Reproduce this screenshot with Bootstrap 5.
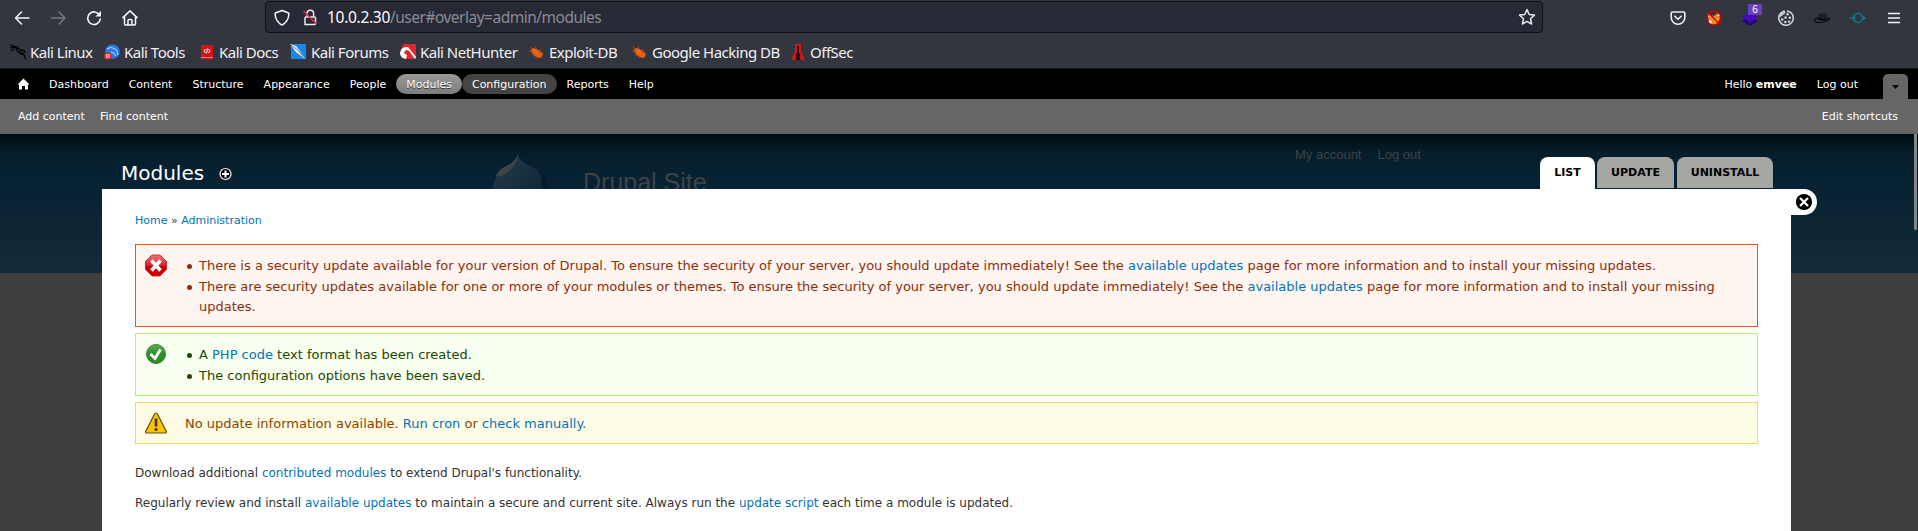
<!DOCTYPE html>
<html lang="en">
<head>
<meta charset="utf-8">
<title>Modules | Drupal Site</title>
<link href="https://cdn.jsdelivr.net/npm/bootstrap@5.3.0/dist/css/bootstrap.min.css" rel="stylesheet">
<style>
body{height:531px;overflow:hidden;background:#3f3f3f;font-family:"DejaVu Sans",sans-serif;font-size:13px;line-height:20px;color:#333}
a{color:#0074bd;text-decoration:none}
svg{display:block;flex:none}
.browser{height:69px;background:#33363e;border-bottom:1px solid #15171b;font-family:"Noto Sans",sans-serif;color:#fbfbfe}
.toolrow{height:35px;padding:0 6px 0 4px}
.slot{width:36px;height:35px}
.urlbar{width:1278px;height:32px;margin:1px 0 0 117px;background:#272935;border:1px solid #101217;border-radius:4px;font-size:15.5px;padding:0 6px 0 8px}
.urlbar .host{letter-spacing:-.3px}
.urlbar .path{color:#8a8b94;letter-spacing:-.5px}
.address{margin-left:9px}
.lock{margin-left:12px}
.marks{height:33px;padding:1px 0 0 10px;font-size:15px;line-height:33px;letter-spacing:-.5px}
.marks a{color:#f0f0f4;white-space:nowrap}
.marks span{margin-left:5px}
.marks .tight span{margin-left:4px}
.count{top:4px;left:16px;width:14px;height:11px;background:#6c3fc0;border-radius:1px;font-size:10px;line-height:11px;color:#fff}
.adminbar{height:30px;background:#000;font-size:11px;line-height:20px;padding:0 10px 0 8px}
.adminbar a,.adminbar .who{color:#fff;padding:1px 10px 0;border-radius:10px;height:20px}
.adminbar .homelink{padding:0 9px}
.adminbar .lit{background:linear-gradient(#999,#7d7d7d);text-shadow:#333 0 1px 0}
.adminbar .hov{background:#444}
.toggler{width:25px;height:25px;background:#666;border-radius:5px 5px 0 0;margin-left:15px}
.shortcuts{height:35px;background:#666;font-size:11px;padding:1px 20px 0 18px;border-bottom:1px solid #5e5e5e;column-gap:15px}
.shortcuts a{color:#fff}
.sitehead{height:139px;background:linear-gradient(#000b12 0,#03151f 9px,#061d2b 20px,#062132 36px,#072233 50px,#132b3a 139px);font-family:"Liberation Sans",sans-serif;color:#3e4346;z-index:0}
.sitehead .name{left:583px;top:33px;font-size:25px;line-height:30px}
.sitehead .user{left:1295px;top:11px;font-size:13px;gap:16px}
.sitehead svg{left:489px;top:19px}
.thumb{right:1px;top:0;width:3px;height:96px;background:#858585;border-radius:0 0 2px 2px}
.overlaybox{width:1689px;margin-left:102px;z-index:1}
.titlebar{height:55px;padding:0 18px 0 19px}
.heading{padding-bottom:4px}
.titlebar h1{font-size:20px;line-height:24px;color:#fff;font-weight:400;margin:0 15px 0 0}
.tabset{gap:3px}
.tabset a{height:31px;background:#a6a7a2;color:#000;font-size:11px;font-weight:700;line-height:27px;padding:2px 0 0;text-align:center;border-radius:8px 8px 0 0}
.tabset a.on{height:32px;background:#fff;margin-right:-1px}
.panel{height:342px;background:#fff;padding:22px 33px 0}
.closer{left:1689px;top:55px;width:26px;height:26px;background:#fff;border-radius:0 13px 13px 0}
.crumbs{font-size:11px;margin-bottom:13px}
.note{border:1px solid;padding:11px 10px 9px 8px;margin-bottom:6px;column-gap:15px}
.note ul{padding-left:17px;margin:0;list-style:none}
.note li{position:relative}
.note li::before{content:"";position:absolute;left:-12px;top:7.5px;width:5px;height:5px;border-radius:50%;background:currentColor}
.note li+li{margin-top:1px}
.bad{border-color:#ed541d;background:#fef5f1;color:#8c2e0b}
.good{border-color:#be7;background:#f8fff0;color:#234600}
.warn{border-color:#ed5;background:#fffce5;color:#840}
.note svg{margin:-2px 0}
.warn svg{margin-bottom:-4px}
.warn span{margin-left:3px}
.helptext{font-size:12px;margin:0 0 10px}
.note+.helptext{margin-top:19px}
</style>
<script src="https://cdn.jsdelivr.net/npm/bootstrap@5.3.0/dist/js/bootstrap.bundle.min.js"></script>
</head>
<body>
<header class="browser">
  <div class="toolrow d-flex align-items-start">
    <div class="slot d-flex align-items-center justify-content-center"><svg width="16" height="16" fill="none" stroke="#f7f7f9" stroke-width="1.5" stroke-linecap="round" stroke-linejoin="round"><path d="M15 8H1.5M7.500 2L1.500 8l6 6"/></svg></div>
    <div class="slot d-flex align-items-center justify-content-center"><svg width="16" height="16" fill="none" stroke="#777980" stroke-width="1.5" stroke-linecap="round" stroke-linejoin="round"><path d="M1.500 8H15M9 2l6 6-6 6"/></svg></div>
    <div class="slot d-flex align-items-center justify-content-center"><svg width="16" height="16" fill="none" stroke="#f7f7f9" stroke-width="1.6" stroke-linecap="round"><path d="M13.600 5.200A6.300 6.300 0 1 0 14.300 9"/><path d="M15 1v5.600H9.400z" fill="#f7f7f9" stroke="none"/></svg></div>
    <div class="slot d-flex align-items-center justify-content-center"><svg width="16" height="16" fill="none" stroke="#f7f7f9" stroke-width="1.500" stroke-linejoin="round" stroke-linecap="round"><path d="M.9 7.600L8 .9l7.100 6.700M2.500 6.500v7.600q0 1 1 1h9q1 0 1-1V6.500M6 15v-4.500q0-1 1-1h2q1 0 1 1V15"/></svg></div>
    <div class="urlbar d-flex align-items-center">
      <svg width="16" height="17" fill="none" stroke="#f7f7f9" stroke-width="1.500" stroke-linejoin="round"><path d="M8 1.500l6 2.300q1 .4.900 1.500C14.500 10.500 12 14 8 16 4 14 1.500 10.500 1.100 5.300 1 4.200 1.500 4 2 3.800z"/></svg>
      <svg class="lock" width="16" height="17" fill="none" stroke="#e8e8ec" stroke-width="1.500"><path d="M5 8V4.500a3.300 3.300 0 0 1 6.600 0V8M3 15.500V9q0-1 1-1h8.500q1 0 1 1v5.500q0 1-1 1z"/><path d="M1.500 2l13 13" stroke="#e22850" stroke-width="1.600"/></svg>
      <span class="flex-grow-1 address"><span class="host">10.0.2.30</span><span class="path">/user#overlay=admin/modules</span></span>
      <svg width="18" height="18" fill="none" stroke="#e8e8ec" stroke-width="1.500" stroke-linejoin="round"><path d="M9 1.600l2.200 4.900 5.200.6-3.900 3.600 1.100 5.300L9 13.400 4.400 16l1.100-5.300-3.900-3.600 5.200-.6z"/></svg>
    </div>
    <div class="d-flex ms-auto">
      <div class="slot d-flex align-items-center justify-content-center"><svg width="16" height="16" fill="none" stroke="#f0f0f3" stroke-width="1.600" stroke-linecap="round" stroke-linejoin="round"><path d="M2.500 2h11q1.300 0 1.300 1.300V7.500a6.800 6.800 0 0 1-13.600 0V3.300Q1.200 2 2.500 2zM4.800 6.200L8 9.300l3.200-3.100"/></svg></div>
      <div class="slot d-flex align-items-center justify-content-center"><svg width="16" height="16"><path d="M2 6l5-1 5-2 2 5-2 5-5 2-4-2z" fill="#f08b20"/><path d="M1.500 3.500l2.500 1-2 3zM12.500 3l1.800 3-2.500 0zM3 10l3 1.500L5 14l-2-1zM10.500 9l2 0-1.500 2z" fill="#fff"/><path d="M5 2.500h4l1 2.500-3 1z" fill="#293847"/><path d="M2.800 3.200l10.600 10.300" stroke="#c80000" stroke-width="1.500"/><circle cx="8" cy="8.300" r="7" fill="none" stroke="#c80000" stroke-width="1.500"/></svg></div>
      <div class="slot d-flex align-items-center justify-content-center position-relative"><svg width="16" height="16"><path d="M0 11l8-5 8 5-8 5z" fill="#20047c"/><path d="M0 7l8-6 8 6-8 5.500z" fill="#4a08b8"/></svg><span class="count position-absolute text-center">6</span></div>
      <div class="slot d-flex align-items-center justify-content-center"><svg width="16" height="16" fill="none" stroke="#d9d9dd" stroke-width="1.500"><path d="M6.500 1A7.200 7.200 0 1 0 15.200 7.500M9 .9a7.200 7.200 0 0 1 6.200 6.600M1.200 6Q4 6.500 4 4q2.700 0 2.500-3"/><g fill="#d9d9dd" stroke="none"><circle cx="9.500" cy="4.200" r="1.200"/><circle cx="7.500" cy="7.500" r="1.200"/><circle cx="11.800" cy="7.800" r="1.200"/><circle cx="4.300" cy="9.500" r="1.200"/><circle cx="7.300" cy="12" r="1.200"/><circle cx="11" cy="11.600" r="1.200"/></g></svg></div>
      <div class="slot d-flex align-items-center justify-content-center"><svg width="16" height="16"><path d="M4 9q0-5 1-5.500h7q1 .5 1 5z" fill="#1c1d20"/><path d="M4.200 8.200Q8 10 13 8.200v1.500q-5 1.500-8.800 0z" fill="#000"/><path d="M4 8Q0 9 .7 11q1.500 2.500 8 1.200Q15 11 15.500 9q.2-1-2-1" fill="none" stroke="#050505" stroke-width="1.100"/></svg></div>
      <div class="slot d-flex align-items-center justify-content-center"><svg width="16" height="16" fill="none" stroke="#0b7c80" stroke-width="1.500"><circle cx="8" cy="8" r="4.500"/><path d="M0 8h5M3 6l2 2-2 2M12.500 8H15"/><path d="M13 5.500L16 8l-3 2.500z" fill="#0b7c80" stroke="none"/></svg></div>
      <div class="slot d-flex align-items-center justify-content-center"><svg width="12" height="12" stroke="#f7f7f9" stroke-width="1.400"><path d="M0 1.500h12M0 6h12M0 10.500h12"/></svg></div>
    </div>
  </div>
  <nav class="marks d-flex">
    <a href="#" class="tight d-flex align-items-center" style="width:94px"><svg width="16" height="16" fill="none" stroke="#050505" stroke-width="1.300"><path d="M0 1l4 1 4 1.500M0 4l4-.8 4 .8 3 2.500M1 7l4-2.500M8 3.500q-3 3 .5 4.500 5 0 5.500 3 .5 2 1.500 4.500M11 6l3 .5 1.500 2M9 8q0 2 4 2.300"/></svg><span>Kali Linux</span></a>
    <a href="#" class="tight d-flex align-items-center" style="width:96px"><svg width="16" height="16"><circle cx="8.500" cy="7.700" r="7.300" fill="#267bf2"/><path d="M3 5q5-3 7 0 4 0 3.500 6M7 8q3 0 5 4" stroke="#cfe3ff" fill="none"/><circle cx="3.800" cy="12" r="3.800" fill="#e02424"/><path d="M2.800 10v4M5 10v4" stroke="#fff"/></svg><span>Kali Tools</span></a>
    <a href="#" class="d-flex align-items-center" style="width:90px"><svg width="14" height="16"><path d="M1 1h12v14.500H1z" fill="#d11216"/><path d="M1 13.500h12" stroke="#f3b4b4" stroke-width=".7"/><path d="M5.500 5L4 7l1.500 2M8.500 5L10 7l-1.500 2M7.500 4.500l-1 5" stroke="#fff" fill="none"/></svg><span>Kali Docs</span></a>
    <a href="#" class="d-flex align-items-center" style="width:110px"><svg width="16" height="16"><path d="M1 0h15v15H1z" fill="#1788ef"/><path d="M0 0l6 2 4 5 5 8-4-3-5-4z" fill="#f5f5f5"/><path d="M1 1l8 6 4 6" stroke="#555" stroke-width=".8" fill="none"/></svg><span>Kali Forums</span></a>
    <a href="#" class="tight d-flex align-items-center" style="width:129px"><svg width="16" height="16"><path d="M2 0h14v15H2z" fill="#e0272b"/><path d="M15 15L10 8Q7 4 4 8q0 2 3 3l-1 4Q0 14 0 9 1 2 8 3l8 10z" fill="#fff"/><path d="M0 0h4L0 6zM0 15l3-1 2 2z" fill="#33363e"/></svg><span>Kali NetHunter</span></a>
    <a href="#" class="d-flex align-items-center" style="width:103px"><svg width="15" height="16"><path d="M2 5l3-1 6 3 3 3-2 4-5-1-4-4z" fill="#ef6414"/><path d="M1 3l4 3M0 7l5 1M3 12l3-2M6 2l2 4M11 5l-1 4M14 9h-4M13 14l-3-3M7 14l1-3" stroke="#b54c16" stroke-width=".8"/></svg><span>Exploit-DB</span></a>
    <a href="#" class="d-flex align-items-center" style="width:158px"><svg width="15" height="16"><path d="M2 5l3-1 6 3 3 3-2 4-5-1-4-4z" fill="#ef6414"/><path d="M1 3l4 3M0 7l5 1M3 12l3-2M6 2l2 4M11 5l-1 4M14 9h-4M13 14l-3-3M7 14l1-3" stroke="#b54c16" stroke-width=".8"/></svg><span>Google Hacking DB</span></a>
    <a href="#" class="d-flex align-items-center"><svg width="15" height="17"><path d="M5 0h6v7l4 9H1l4-9z" fill="#d5151b"/><path d="M7 2h2v7l1.500 1.500-1 2.500 1 3h-5l1-3-1-2.500L7 9z" fill="#26090b"/></svg><span>OffSec</span></a>
  </nav>
</header>

<nav class="adminbar d-flex align-items-center">
  <a href="#" class="homelink"><svg width="13" height="20"><path d="M6.500 4.500L12.500 10.500H11v5H8v-3.500H5v3.500H2v-5H.5z" fill="#fff"/></svg></a>
  <a href="#">Dashboard</a><a href="#">Content</a><a href="#">Structure</a><a href="#">Appearance</a><a href="#">People</a><a href="#" class="lit">Modules</a><a href="#" class="hov">Configuration</a><a href="#">Reports</a><a href="#">Help</a>
  <span class="who ms-auto">Hello <b>emvee</b></span><a href="#">Log out</a>
  <div class="toggler align-self-end d-flex justify-content-center"><svg width="9" height="25"><path d="M1 11h7l-3.500 4z" fill="#000"/></svg></div>
</nav>
<nav class="shortcuts d-flex align-items-center"><a href="#">Add content</a><a href="#">Find content</a><a href="#" class="ms-auto">Edit shortcuts</a></nav>

<main class="position-relative">
  <div class="sitehead position-absolute w-100">
    <svg class="position-absolute" width="62" height="60"><defs><linearGradient id="drop" x2="1" y2="1"><stop stop-color="#273943"/><stop offset=".55" stop-color="#142e3f"/><stop offset="1" stop-color="#0b2230"/></linearGradient></defs><path d="M29 1Q30 8 39 12 59 20 59 42L55 60H6L3 38Q4 22 20 12 28 7 29 1z" fill="url(#drop)"/><path d="M29 1Q29 6 27 9 24 16 16 21q-8 5-9 1 3-6 14-11Q27 7 29 1z" fill="#3d444a"/><path d="M50 18q10 10 9 24h-7q3-14-2-24z" fill="#081b28"/></svg>
    <span class="name position-absolute text-nowrap">Drupal Site</span>
    <div class="user position-absolute d-flex text-nowrap"><span>My account</span><span>Log out</span></div>
    <div class="thumb position-absolute"></div>
  </div>
  <section class="overlaybox position-relative">
    <div class="titlebar d-flex align-items-end">
      <div class="heading d-flex align-items-center"><h1>Modules</h1><svg width="13" height="24"><circle cx="6.500" cy="13" r="5.500" fill="#000" stroke="#fff" stroke-width="1.200"/><path d="M6.500 9.500v7M3 13h7" stroke="#fff" stroke-width="2"/></svg></div>
      <div class="tabset d-flex align-items-start ms-auto"><a href="#" class="on" style="width:55px">LIST</a><a href="#" style="width:77px">UPDATE</a><a href="#" style="width:96px">UNINSTALL</a></div>
    </div>
    <a href="#" class="closer position-absolute d-flex align-items-center justify-content-center"><svg width="18" height="18"><circle cx="9" cy="9" r="8.100" fill="#000"/><path d="M5 5l8 8M13 5l-8 8" stroke="#fff" stroke-width="2.200"/></svg></a>
    <div class="panel">
      <div class="crumbs"><a href="#">Home</a> » <a href="#">Administration</a></div>
      <div class="note bad d-flex">
        <svg width="23" height="23"><defs><linearGradient id="r" x2="0" y2="1"><stop stop-color="#e9787b"/><stop offset=".5" stop-color="#d92027"/><stop offset=".55" stop-color="#d00005"/></linearGradient></defs><path d="M8 1h8l6.500 6.500v8L16 22H8l-6.500-6.500v-8z" fill="url(#r)" stroke="#c9141a" stroke-width=".8"/><path d="M7.500 6.500l9 10M16.500 6.500l-9 10" stroke="#fff" stroke-width="3.600"/></svg>
        <ul><li>There is a security update available for your version of Drupal. To ensure the security of your server, you should update immediately! See the <a href="#">available updates</a> page for more information and to install your missing updates.</li><li>There are security updates available for one or more of your modules or themes. To ensure the security of your server, you should update immediately! See the <a href="#">available updates</a> page for more information and to install your missing updates.</li></ul>
      </div>
      <div class="note good d-flex">
        <svg width="23" height="23"><defs><linearGradient id="g" x2="0" y2="1"><stop stop-color="#5cac57"/><stop offset=".5" stop-color="#2f8f2c"/><stop offset="1" stop-color="#259020"/></linearGradient></defs><circle cx="12" cy="11" r="9.500" fill="url(#g)" stroke="#30762e" stroke-width=".9"/><path d="M6.500 11l4.500 4.500L16.500 6.500" fill="none" stroke="#fff" stroke-width="2.800"/></svg>
        <ul><li>A <a href="#">PHP code</a> text format has been created.</li><li>The configuration options have been saved.</li></ul>
      </div>
      <div class="note warn d-flex">
        <svg width="23" height="23"><path d="M12 1q1 0 1.600 1.200L22.300 19.500q.2 1.500-1 1.500H2.500q-1.200 0-.8-1.500L10.400 2.200Q11 1 12 1z" fill="#fac500" stroke="#5e4e1b" stroke-width="1.200"/><path d="M12 6.500v8" stroke="#3b3420" stroke-width="2.600"/><circle cx="12" cy="17.500" r="1.500" fill="#3b3420"/></svg>
        <span>No update information available. <a href="#">Run cron</a> or <a href="#">check manually</a>.</span>
      </div>
      <p class="helptext">Download additional <a href="#">contributed modules</a> to extend Drupal's functionality.</p>
      <p class="helptext">Regularly review and install <a href="#">available updates</a> to maintain a secure and current site. Always run the <a href="#">update script</a> each time a module is updated.</p>
    </div>
  </section>
</main>
</body>
</html>
